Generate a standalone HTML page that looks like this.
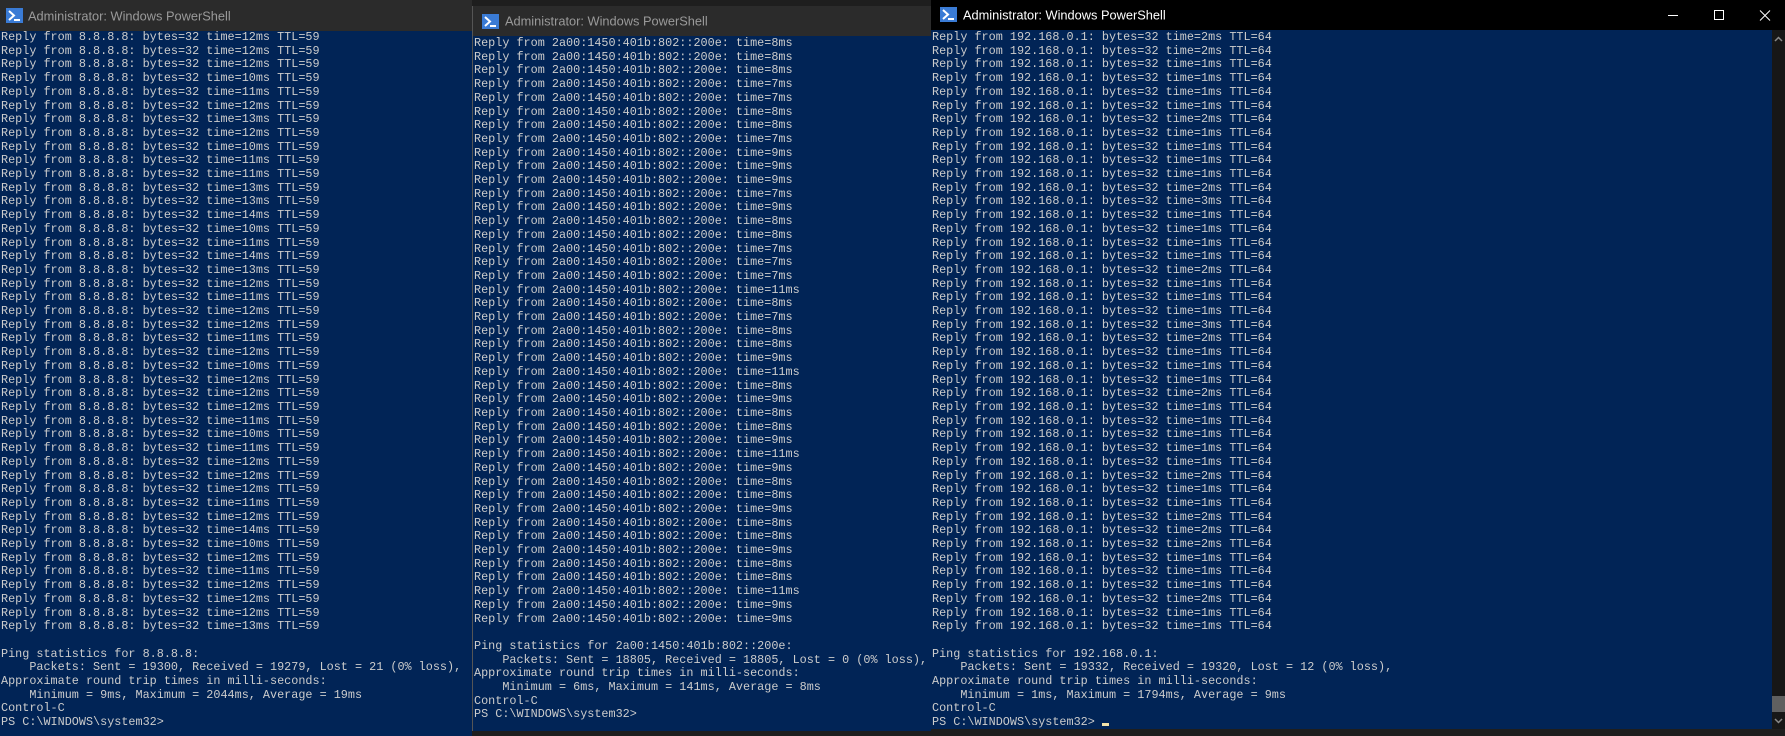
<!DOCTYPE html>
<html><head><meta charset="utf-8"><style>
html,body{margin:0;padding:0;width:1785px;height:736px;overflow:hidden;background:#1e1e1e;}
.win{position:absolute;overflow:hidden;}
.tb{position:absolute;left:0;right:0;top:0;font-family:"Liberation Sans",sans-serif;font-size:12.8px;}
.tb span{position:absolute;top:50%;transform:translateY(-50%);}
.body{position:absolute;left:0;right:0;background:#012456;}
pre{margin:0;font-family:"Liberation Mono",monospace;font-size:11.8px;line-height:13.71px;color:#cccccc;position:absolute;}
.ic{position:absolute;}
</style></head><body>

<!-- Window 1 -->
<div class="win" style="left:0;top:0;width:472px;height:736px;background:#2b2b2b;">
 <div class="tb" style="height:31px;background:#2b2b2b;">
  <svg class="ic" style="left:6px;top:8px" width="17" height="15" viewBox="0 0 17 15"><rect width="17" height="15" fill="#3a7bd5"/><path d="M3 3 L8 7.5 L3 12" stroke="#fff" stroke-width="2" fill="none"/><rect x="8" y="11" width="6" height="2" fill="#fff"/></svg>
  <span style="left:28px;color:#9a9a9a">Administrator: Windows PowerShell</span>
 </div>
 <div class="body" style="top:31px;bottom:0;">
<pre style="left:1px;top:0px">Reply from 8.8.8.8: bytes=32 time=12ms TTL=59
Reply from 8.8.8.8: bytes=32 time=12ms TTL=59
Reply from 8.8.8.8: bytes=32 time=12ms TTL=59
Reply from 8.8.8.8: bytes=32 time=10ms TTL=59
Reply from 8.8.8.8: bytes=32 time=11ms TTL=59
Reply from 8.8.8.8: bytes=32 time=12ms TTL=59
Reply from 8.8.8.8: bytes=32 time=13ms TTL=59
Reply from 8.8.8.8: bytes=32 time=12ms TTL=59
Reply from 8.8.8.8: bytes=32 time=10ms TTL=59
Reply from 8.8.8.8: bytes=32 time=11ms TTL=59
Reply from 8.8.8.8: bytes=32 time=11ms TTL=59
Reply from 8.8.8.8: bytes=32 time=13ms TTL=59
Reply from 8.8.8.8: bytes=32 time=13ms TTL=59
Reply from 8.8.8.8: bytes=32 time=14ms TTL=59
Reply from 8.8.8.8: bytes=32 time=10ms TTL=59
Reply from 8.8.8.8: bytes=32 time=11ms TTL=59
Reply from 8.8.8.8: bytes=32 time=14ms TTL=59
Reply from 8.8.8.8: bytes=32 time=13ms TTL=59
Reply from 8.8.8.8: bytes=32 time=12ms TTL=59
Reply from 8.8.8.8: bytes=32 time=11ms TTL=59
Reply from 8.8.8.8: bytes=32 time=12ms TTL=59
Reply from 8.8.8.8: bytes=32 time=12ms TTL=59
Reply from 8.8.8.8: bytes=32 time=11ms TTL=59
Reply from 8.8.8.8: bytes=32 time=12ms TTL=59
Reply from 8.8.8.8: bytes=32 time=10ms TTL=59
Reply from 8.8.8.8: bytes=32 time=12ms TTL=59
Reply from 8.8.8.8: bytes=32 time=12ms TTL=59
Reply from 8.8.8.8: bytes=32 time=12ms TTL=59
Reply from 8.8.8.8: bytes=32 time=11ms TTL=59
Reply from 8.8.8.8: bytes=32 time=10ms TTL=59
Reply from 8.8.8.8: bytes=32 time=11ms TTL=59
Reply from 8.8.8.8: bytes=32 time=12ms TTL=59
Reply from 8.8.8.8: bytes=32 time=12ms TTL=59
Reply from 8.8.8.8: bytes=32 time=12ms TTL=59
Reply from 8.8.8.8: bytes=32 time=11ms TTL=59
Reply from 8.8.8.8: bytes=32 time=12ms TTL=59
Reply from 8.8.8.8: bytes=32 time=14ms TTL=59
Reply from 8.8.8.8: bytes=32 time=10ms TTL=59
Reply from 8.8.8.8: bytes=32 time=12ms TTL=59
Reply from 8.8.8.8: bytes=32 time=11ms TTL=59
Reply from 8.8.8.8: bytes=32 time=12ms TTL=59
Reply from 8.8.8.8: bytes=32 time=12ms TTL=59
Reply from 8.8.8.8: bytes=32 time=12ms TTL=59
Reply from 8.8.8.8: bytes=32 time=13ms TTL=59

Ping statistics for 8.8.8.8:
    Packets: Sent = 19300, Received = 19279, Lost = 21 (0% loss),
Approximate round trip times in milli-seconds:
    Minimum = 9ms, Maximum = 2044ms, Average = 19ms
Control-C
PS C:\WINDOWS\system32></pre>
 </div>
</div>

<!-- Window 2 -->
<div class="win" style="left:472px;top:6px;width:458px;height:725px;background:#2b2b2b;border-left:1px solid #555;">
 <div class="tb" style="height:30px;background:#2b2b2b;">
  <svg class="ic" style="left:9px;top:8px" width="17" height="15" viewBox="0 0 17 15"><rect width="17" height="15" fill="#3a7bd5"/><path d="M3 3 L8 7.5 L3 12" stroke="#fff" stroke-width="2" fill="none"/><rect x="8" y="11" width="6" height="2" fill="#fff"/></svg>
  <span style="left:32px;color:#9a9a9a">Administrator: Windows PowerShell</span>
 </div>
 <div class="body" style="top:30px;bottom:0;">
<pre style="left:1px;top:1px">Reply from 2a00:1450:401b:802::200e: time=8ms
Reply from 2a00:1450:401b:802::200e: time=8ms
Reply from 2a00:1450:401b:802::200e: time=8ms
Reply from 2a00:1450:401b:802::200e: time=7ms
Reply from 2a00:1450:401b:802::200e: time=7ms
Reply from 2a00:1450:401b:802::200e: time=8ms
Reply from 2a00:1450:401b:802::200e: time=8ms
Reply from 2a00:1450:401b:802::200e: time=7ms
Reply from 2a00:1450:401b:802::200e: time=9ms
Reply from 2a00:1450:401b:802::200e: time=9ms
Reply from 2a00:1450:401b:802::200e: time=9ms
Reply from 2a00:1450:401b:802::200e: time=7ms
Reply from 2a00:1450:401b:802::200e: time=9ms
Reply from 2a00:1450:401b:802::200e: time=8ms
Reply from 2a00:1450:401b:802::200e: time=8ms
Reply from 2a00:1450:401b:802::200e: time=7ms
Reply from 2a00:1450:401b:802::200e: time=7ms
Reply from 2a00:1450:401b:802::200e: time=7ms
Reply from 2a00:1450:401b:802::200e: time=11ms
Reply from 2a00:1450:401b:802::200e: time=8ms
Reply from 2a00:1450:401b:802::200e: time=7ms
Reply from 2a00:1450:401b:802::200e: time=8ms
Reply from 2a00:1450:401b:802::200e: time=8ms
Reply from 2a00:1450:401b:802::200e: time=9ms
Reply from 2a00:1450:401b:802::200e: time=11ms
Reply from 2a00:1450:401b:802::200e: time=8ms
Reply from 2a00:1450:401b:802::200e: time=9ms
Reply from 2a00:1450:401b:802::200e: time=8ms
Reply from 2a00:1450:401b:802::200e: time=8ms
Reply from 2a00:1450:401b:802::200e: time=9ms
Reply from 2a00:1450:401b:802::200e: time=11ms
Reply from 2a00:1450:401b:802::200e: time=9ms
Reply from 2a00:1450:401b:802::200e: time=8ms
Reply from 2a00:1450:401b:802::200e: time=8ms
Reply from 2a00:1450:401b:802::200e: time=9ms
Reply from 2a00:1450:401b:802::200e: time=8ms
Reply from 2a00:1450:401b:802::200e: time=8ms
Reply from 2a00:1450:401b:802::200e: time=9ms
Reply from 2a00:1450:401b:802::200e: time=8ms
Reply from 2a00:1450:401b:802::200e: time=8ms
Reply from 2a00:1450:401b:802::200e: time=11ms
Reply from 2a00:1450:401b:802::200e: time=9ms
Reply from 2a00:1450:401b:802::200e: time=9ms

Ping statistics for 2a00:1450:401b:802::200e:
    Packets: Sent = 18805, Received = 18805, Lost = 0 (0% loss),
Approximate round trip times in milli-seconds:
    Minimum = 6ms, Maximum = 141ms, Average = 8ms
Control-C
PS C:\WINDOWS\system32></pre>
 </div>
</div>

<!-- Window 3 -->
<div class="win" style="left:931px;top:0;width:854px;height:729px;background:#000;">
 <div class="tb" style="height:30px;background:#000;">
  <svg class="ic" style="left:9px;top:7px" width="17" height="15" viewBox="0 0 17 15"><rect width="17" height="15" fill="#3a7bd5"/><path d="M3 3 L8 7.5 L3 12" stroke="#fff" stroke-width="2" fill="none"/><rect x="8" y="11" width="6" height="2" fill="#fff"/></svg>
  <span style="left:32px;color:#ffffff">Administrator: Windows PowerShell</span>
  <svg class="ic" style="left:737px;top:9px" width="112" height="14" viewBox="0 0 112 14"><path d="M0 6.5 H10" stroke="#fff" stroke-width="1"/><rect x="46.5" y="1.5" width="9" height="9" stroke="#fff" fill="none"/><path d="M92 1.5 L102 11.5 M102 1.5 L92 11.5" stroke="#fff" stroke-width="1"/></svg>
 </div>
 <div class="body" style="top:30px;bottom:0;right:13px;">
<pre style="left:1px;top:1px">Reply from 192.168.0.1: bytes=32 time=2ms TTL=64
Reply from 192.168.0.1: bytes=32 time=2ms TTL=64
Reply from 192.168.0.1: bytes=32 time=1ms TTL=64
Reply from 192.168.0.1: bytes=32 time=1ms TTL=64
Reply from 192.168.0.1: bytes=32 time=1ms TTL=64
Reply from 192.168.0.1: bytes=32 time=1ms TTL=64
Reply from 192.168.0.1: bytes=32 time=2ms TTL=64
Reply from 192.168.0.1: bytes=32 time=1ms TTL=64
Reply from 192.168.0.1: bytes=32 time=1ms TTL=64
Reply from 192.168.0.1: bytes=32 time=1ms TTL=64
Reply from 192.168.0.1: bytes=32 time=1ms TTL=64
Reply from 192.168.0.1: bytes=32 time=2ms TTL=64
Reply from 192.168.0.1: bytes=32 time=3ms TTL=64
Reply from 192.168.0.1: bytes=32 time=1ms TTL=64
Reply from 192.168.0.1: bytes=32 time=1ms TTL=64
Reply from 192.168.0.1: bytes=32 time=1ms TTL=64
Reply from 192.168.0.1: bytes=32 time=1ms TTL=64
Reply from 192.168.0.1: bytes=32 time=2ms TTL=64
Reply from 192.168.0.1: bytes=32 time=1ms TTL=64
Reply from 192.168.0.1: bytes=32 time=1ms TTL=64
Reply from 192.168.0.1: bytes=32 time=1ms TTL=64
Reply from 192.168.0.1: bytes=32 time=3ms TTL=64
Reply from 192.168.0.1: bytes=32 time=2ms TTL=64
Reply from 192.168.0.1: bytes=32 time=1ms TTL=64
Reply from 192.168.0.1: bytes=32 time=1ms TTL=64
Reply from 192.168.0.1: bytes=32 time=1ms TTL=64
Reply from 192.168.0.1: bytes=32 time=2ms TTL=64
Reply from 192.168.0.1: bytes=32 time=1ms TTL=64
Reply from 192.168.0.1: bytes=32 time=1ms TTL=64
Reply from 192.168.0.1: bytes=32 time=1ms TTL=64
Reply from 192.168.0.1: bytes=32 time=1ms TTL=64
Reply from 192.168.0.1: bytes=32 time=1ms TTL=64
Reply from 192.168.0.1: bytes=32 time=2ms TTL=64
Reply from 192.168.0.1: bytes=32 time=1ms TTL=64
Reply from 192.168.0.1: bytes=32 time=1ms TTL=64
Reply from 192.168.0.1: bytes=32 time=2ms TTL=64
Reply from 192.168.0.1: bytes=32 time=2ms TTL=64
Reply from 192.168.0.1: bytes=32 time=2ms TTL=64
Reply from 192.168.0.1: bytes=32 time=1ms TTL=64
Reply from 192.168.0.1: bytes=32 time=1ms TTL=64
Reply from 192.168.0.1: bytes=32 time=1ms TTL=64
Reply from 192.168.0.1: bytes=32 time=2ms TTL=64
Reply from 192.168.0.1: bytes=32 time=1ms TTL=64
Reply from 192.168.0.1: bytes=32 time=1ms TTL=64

Ping statistics for 192.168.0.1:
    Packets: Sent = 19332, Received = 19320, Lost = 12 (0% loss),
Approximate round trip times in milli-seconds:
    Minimum = 1ms, Maximum = 1794ms, Average = 9ms
Control-C
PS C:\WINDOWS\system32> <span style="display:inline-block;width:7px;height:3px;background:#f3e3a8;vertical-align:-1px"></span></pre>
 </div>
 <div style="position:absolute;right:0;top:30px;width:13px;bottom:0;background:#171717;">
  <svg style="position:absolute;left:2px;top:6px" width="9" height="6" viewBox="0 0 9 6"><path d="M1 5 L4.5 1.5 L8 5" stroke="#8a8a8a" stroke-width="1.5" fill="none"/></svg>
  <div style="position:absolute;left:0;width:13px;top:666px;height:16px;background:#606060"></div>
  <svg style="position:absolute;left:2px;top:688px" width="9" height="6" viewBox="0 0 9 6"><path d="M1 1 L4.5 4.5 L8 1" stroke="#8a8a8a" stroke-width="1.5" fill="none"/></svg>
 </div>
</div>
</body></html>
